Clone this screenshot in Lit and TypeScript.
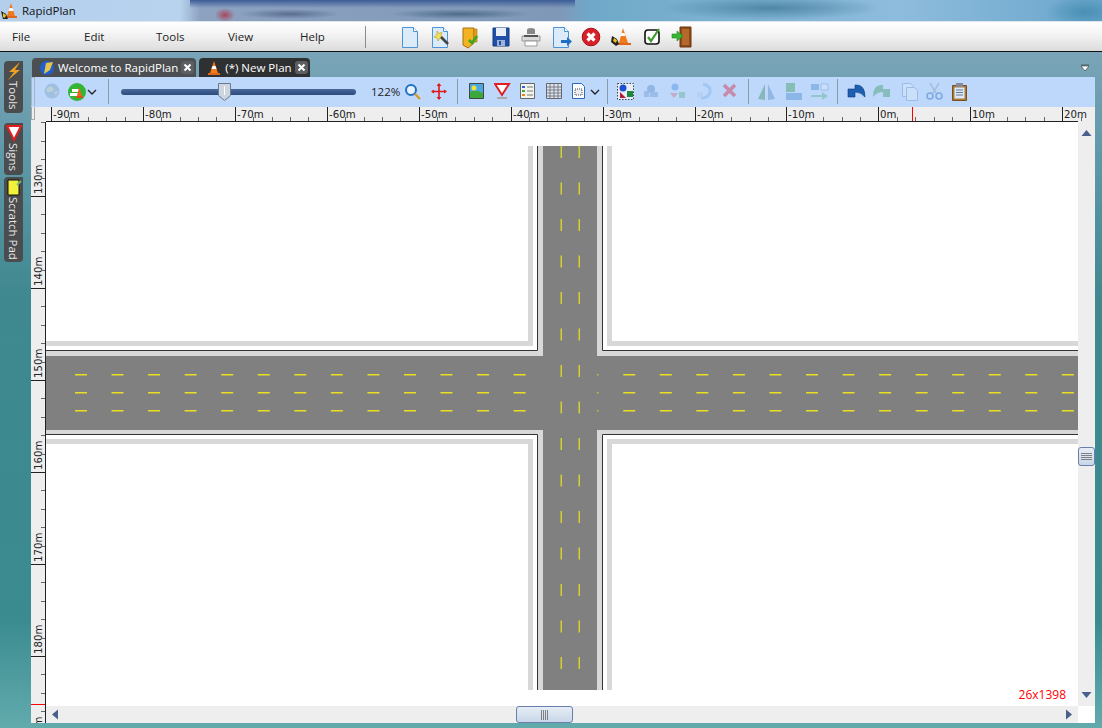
import { LitElement, html, svg, css } from 'lit';
import { customElement } from 'lit/decorators.js';

const range = (n: number) => Array.from({ length: n }, (_, i) => i);

// menu bar icons, 24x24 viewbox
const page = svg`<path d="M4.500 2.500h11l4 4v16h-15z" fill="#dcebfa" stroke="#4d94d6"/><path d="M15.500 2.500v4h4" fill="#fff" stroke="#4d94d6"/>`;
const mainIcons = [
    page,
    svg`${page}<path d="M9 6l2 2.500 3-1-1 3 2 2-3 .5-2 3-1-3-3-1 3-2.500z" fill="#f2e05a" stroke="#b59a22" stroke-width=".6"/><path d="M13 12l7 7" stroke="#444" stroke-width="2.600"/>`,
    svg`<path d="M5 3h11v15l-6 5-5-3z" fill="#f2b221" stroke="#a8700f"/><path d="M16 4h3v13h-3z" fill="#e8a21a" stroke="#a8700f" stroke-width=".6"/><path d="M19 11l-5 7-3-3" fill="none" stroke="#3aa822" stroke-width="2.600"/>`,
    svg`<path d="M4 3h16v18H4z" fill="#1f4fa8" stroke="#123a80"/><path d="M7 3h10v8H7z" fill="#e8eef6"/><path d="M8 15h8v6H8z" fill="#9db4d8"/><path d="M10 16h2v4h-2z" fill="#1f4fa8"/>`,
    svg`<path d="M8 9V5q0-2 4-2t4 2v4z" fill="#888"/><path d="M3 11h18v5H3z" fill="#d9d9d9" stroke="#9a9a9a"/><path d="M6 16h12v5H6z" fill="#fff" stroke="#999"/><path d="M5 10h14v2H5z" fill="#555"/>`,
    svg`${page}<path d="M12 15h6v-3l5 4.500-5 4.500v-3h-6z" fill="#1f6fc4"/>`,
    svg`<circle cx="12" cy="12" r="8.800" fill="#d8202a" stroke="#a81018"/><path d="M8.500 8.500l7 7M15.500 8.500l-7 7" stroke="#fff" stroke-width="3.200"/>`,
    svg`<path d="M14 3l5 15h-9z" fill="#f07a1c"/><path d="M12.500 8h3l1 3h-5z" fill="#fff"/><path d="M8 18h14v2H8z" fill="#e0661a"/><path d="M3 11l5 3 2 5-3 2-5-4z" fill="#222"/><path d="M5 13l3 2-1 3-3-2z" fill="#e8c21e"/>`,
    svg`<rect x="5" y="5" width="14" height="14" rx="3" fill="#fff" stroke="#111" stroke-width="1.600"/><path d="M8 12l3 4 8-12" fill="none" stroke="#3f9a2e" stroke-width="2.200"/>`,
    svg`<path d="M10 2h11v20H10z" fill="#8f4a18" stroke="#6a3610"/><path d="M12 4h7v16h-7z" fill="#b4682a"/><path d="M2 9h5V6l6 5-6 5v-3H2z" fill="#35b534" stroke="#1f8a20" stroke-width=".6"/>`,
];

const chevron = svg`<path d="M1 1l4 4 4-4" fill="none" stroke="#222" stroke-width="1.300"/>`;
const closeX = html`<span class="tab-x"><svg width="9" height="9" viewBox="0 0 9 9"><path d="M1.500 1.500l6 6M7.500 1.500l-6 6" stroke="#fff" stroke-width="2" /></svg></span>`;

// second toolbar, left to right
type Tool = { x: number; dim?: boolean; g: unknown };
const tools: Tool[] = [
    { x: 44, dim: true, g: svg`<circle cx="8" cy="8" r="7.500" fill="#7aa0c4"/><path d="M3 5q4-3 6 0t-3 4-3-4zM10 9l4-1-2 5z" fill="#b8c8a8"/>` },
    { x: 68, g: svg`<circle cx="9" cy="9" r="9" fill="#35b534"/><path d="M2 10h8v3H2zM4 6h7v3H4z" fill="#fff"/><path d="M11 4l3 9H9z" fill="#e8661a"/><path d="M8 13h7v2H8z" fill="#d8541a"/>` },
    { x: 469, g: svg`<path d="M.5.500h14v15H.500z" fill="#4aa8e0" stroke="#444"/><circle cx="5" cy="5" r="2.500" fill="#f6e03a"/><path d="M1 9q6-3 13 1v5H1z" fill="#3aa83a"/>` },
    { x: 494, g: svg`<path d="M1 1h14L8 12z" fill="#fff" stroke="#e02020" stroke-width="2"/><path d="M3 14h10v2H3z" fill="#aaa"/>` },
    { x: 520, g: svg`<path d="M.5.500h14v15H.500z" fill="#f4f4ee" stroke="#666"/><path d="M2 3h3v2H2z" fill="#2a6ad0"/><path d="M2 7h3v2H2z" fill="#3aa83a"/><path d="M2 11h3v2H2z" fill="#e08a20"/><path d="M7 4h6M7 8h6M7 12h6" stroke="#777"/>` },
    { x: 546, g: svg`<path d="M.5.500h15v15H.500z" fill="#dde4ea" stroke="#667"/><path d="M1 4h14M1 7h14M1 10h14M1 13h14M4 1v14M8 1v14M12 1v14" stroke="#667" stroke-width=".8"/>` },
    { x: 571, g: svg`<path d="M1.500.500h9l3 3v12h-12z" fill="#fff" stroke="#2a6ac0"/><path d="M4 6h7v6H4z" fill="#eee" stroke="#444" stroke-dasharray="1 1"/>` },
    { x: 617, g: svg`<path d="M.5.500h16v16H.500z" fill="#e8eef8" stroke="#444" stroke-dasharray="1.500 1.500"/><circle cx="6" cy="5" r="3.500" fill="#1d4fd0"/><path d="M3 9l6 6H3z" fill="#b01c3c"/><path d="M10 8h6v6h-6z" fill="#1a8a3a"/>` },
    { x: 643, dim: true, g: svg`<circle cx="8" cy="6" r="4" fill="#5a88c8"/><path d="M1 8h5v6H1zM7 9h8v5H7z" fill="#6a98d0"/>` },
    { x: 669, dim: true, g: svg`<circle cx="6" cy="4" r="3.500" fill="#4a88e0"/><path d="M1 10h8l-4 5z" fill="#d06a8a"/><path d="M10 9h6v6h-6z" fill="#5ab08a"/>` },
    { x: 696, dim: true, g: svg`<path d="M7 1q8 2 7 8t-9 6" fill="none" stroke="#7fb0e8" stroke-width="3"/><path d="M1 9h6v5H1z" fill="#a8c8ee"/>` },
    { x: 722, dim: true, g: svg`<path d="M2 2l11 11M13 2L2 13" stroke="#d02040" stroke-width="3.600"/>` },
    { x: 758, dim: true, g: svg`<path d="M7 1v16L0 16z" fill="#3f8a5a"/><path d="M10 1v16l7-1z" fill="#5a88c8"/>` },
    { x: 785, dim: true, g: svg`<path d="M1 0h9v9H1z" fill="#3f9a5a"/><path d="M1 10h16v7H1z" fill="#4a88d0"/>` },
    { x: 810, dim: true, g: svg`<path d="M1 1h8v6H1z" fill="#4a88d0"/><path d="M11 1h7v6h-7z" fill="#dfeaf8" stroke="#6a98d0"/><path d="M1 12h11V9l6 4-6 4v-3H1z" fill="#5ab08a"/>` },
    { x: 847, g: svg`<path d="M1 6h7V2q10-1 10 12-4-5-10-5v5H1z" fill="#1f5fb0" stroke="#123a80" stroke-width=".6"/>` },
    { x: 873, dim: true, g: svg`<path d="M17 6h-7V2Q0 1 0 14q4-5 10-5v5h7z" fill="#3f9a6a"/>` },
    { x: 901, dim: true, g: svg`<path d="M1.500.500h8l3 3v10h-11z" fill="#dfeaf8" stroke="#6a98d0"/><path d="M5.500 4.500h8l3 3v10h-11z" fill="#dfeaf8" stroke="#6a98d0"/>` },
    { x: 926, dim: true, g: svg`<path d="M4 0l6 10M13 0L7 10" stroke="#8a9ab0" stroke-width="1.600"/><circle cx="4" cy="13" r="3" fill="none" stroke="#2a6ac0" stroke-width="1.600"/><circle cx="13" cy="13" r="3" fill="none" stroke="#2a6ac0" stroke-width="1.600"/>` },
    { x: 952, g: svg`<path d="M.5 2.500h14v15H.500z" fill="#a87a3a" stroke="#7a5020"/><path d="M2.500 4.500h10v11h-10z" fill="#dfeaf4"/><path d="M4 0h7v4H4z" fill="#889"/><path d="M4 7h7M4 9.500h7M4 12h7" stroke="#5a7a9a"/>` },
];
const separators = [108, 457, 607, 748, 837];

@customElement('app-root')
export class AppRoot extends LitElement {
    static styles = css`
        :host {
            display: block;
            width: 1102px;
            height: 728px;
            overflow: hidden;
            font-family: "Open Sans", "Noto Sans", sans-serif;
            background: linear-gradient(#7aa4b8 52px, #5d98a6 160px, #3f8890 300px, #3a8b90 620px, #62abad 728px);
        }
        .title {
            height: 21px;
            display: flex;
            align-items: center;
            gap: 3px;
            padding-left: 1px;
            font-size: 11.5px;
            color: #111;
            background:
                linear-gradient(#3c5c96, transparent) 190px 0 / 385px 8px no-repeat,
                radial-gradient(ellipse 10px 7px at 225px 15px, #a8485c, transparent),
                radial-gradient(ellipse 50px 5px at 290px 14px, #5a6e90, transparent),
                radial-gradient(ellipse 70px 5px at 460px 14px, #4c6c8a, transparent),
                radial-gradient(ellipse 110px 12px at 770px 8px, #4f86a6, transparent),
                radial-gradient(ellipse 40px 16px at 1085px 12px, #4a8fb4, transparent),
                linear-gradient(90deg, #b4cfec, #b8d3ee 180px, #8ca2c0 200px, #8098b8 560px, #6fa8c8 590px, #7ab0d0 700px, #8ebcdc 900px, #6aa6cc);
        }
        .menubar {
            height: 29px;
            border-top: 1px solid #dfe5ea;
            border-bottom: 1px solid #111;
            display: flex;
            align-items: center;
            background: linear-gradient(#fff, #f6f6f6 35%, #dcdcdc);
            font-size: 11.5px;
            color: #222;
        }
        .menu {
            width: 72px;
            flex: none;
            padding-left: 12px;
            box-sizing: border-box;
        }
        .menu:last-of-type {
            width: 77px;
        }
        .divider {
            width: 1px;
            height: 22px;
            background: #8c8c8c;
            flex: none;
        }
        .main-icons {
            display: flex;
            gap: 6.2px;
            margin-left: 32px;
        }
        .main-icons svg {
            width: 24px;
            height: 24px;
        }
        .workspace {
            display: flex;
            height: 676px;
        }
        .side {
            width: 31px;
            flex: none;
            display: flex;
            flex-direction: column;
            align-items: flex-end;
            padding: 9px 8px 0 0;
            box-sizing: border-box;
        }
        .side-tab {
            width: 19px;
            box-sizing: border-box;
            background: #4a4c4e;
            border-radius: 4px 0 4px 4px;
            display: flex;
            flex-direction: column;
            align-items: center;
            padding-top: 1px;
            gap: 1px;
            color: #e8e8e8;
            font-size: 11.5px;
        }
        .side-tab span {
            writing-mode: vertical-rl;
            line-height: 17px;
        }
        .side-tab.tools {
            height: 52px;
            margin-bottom: 10px;
        }
        .side-tab.signs {
            height: 52px;
            margin-bottom: 2px;
        }
        .side-tab.pad {
            height: 85px;
        }
        .main {
            flex: 1;
            min-width: 0;
        }
        .tabs {
            height: 25px;
            position: relative;
            display: flex;
            align-items: flex-end;
            gap: 3px;
            padding-left: 1px;
        }
        .tab {
            height: 19px;
            box-sizing: border-box;
            display: flex;
            align-items: center;
            gap: 3px;
            padding: 0 2px 0 7px;
            background: #4c4f52;
            border-radius: 4px 4px 0 0;
            color: #fff;
            font-size: 11.5px;
        }
        .tab.active {
            background: #2f3032;
        }
        .tab-x {
            width: 13px;
            height: 13px;
            background: #5c5f62;
            border-radius: 3px;
            display: flex;
            align-items: center;
            justify-content: center;
        }
        .tab svg {
            flex: none;
        }
        .tab-menu {
            position: absolute;
            right: 12px;
            top: 12px;
        }
        .panel {
            width: 1064px;
            height: 646px;
            display: grid;
            grid-template-columns: 15px 1032px 17px;
            grid-template-rows: 30px 15px 584px 17px;
        }
        .toolbar {
            grid-column: 1 / 4;
            position: relative;
            background: #bdd8fb;
        }
        .tool {
            position: absolute;
            top: 6px;
        }
        .tool.dim {
            opacity: .42;
        }
        .sep {
            position: absolute;
            top: 2px;
            width: 1px;
            height: 25px;
            background: #8a9aac;
        }
        .grip {
            position: absolute;
            left: 0;
            top: 0;
            width: 4px;
            height: 29px;
            border: 1px solid #a8b4c4;
            border-width: 1px 1px 0 1px;
            box-sizing: border-box;
        }
        .chevron {
            position: absolute;
            top: 12px;
        }
        .chevron.first {
            left: 56px;
        }
        .chevron.second {
            left: 559px;
        }
        .slider {
            position: absolute;
            left: 90px;
            top: 12px;
            width: 235px;
            height: 6px;
            border-radius: 3px;
            background: linear-gradient(#4a6a9a, #2c4a7c);
        }
        .thumb {
            position: absolute;
            left: 187px;
            top: 6px;
        }
        .zoom-text {
            position: absolute;
            left: 340px;
            top: 7px;
            font-size: 11.5px;
            color: #222;
        }
        .tool.magnifier {
            left: 373px;
        }
        .tool.move {
            left: 400px;
        }
        .ruler-corner {
            background: #eee;
            position: relative;
        }
        .grip2 {
            position: absolute;
            left: 0;
            top: 0;
            width: 4px;
            height: 13px;
            border: 1px solid #a8a8a8;
            border-top: 0;
            box-sizing: border-box;
        }
        .ruler-h {
            grid-column: 2 / 4;
            height: 15px;
            background: #eee;
        }
        .ruler-v {
            background: #eee;
            grid-row: 3 / 5;
            width: 15px;
            height: 601px;
        }
        svg.rule {
            display: block;
        }
        svg.rule text {
            font-family: "DejaVu Sans", Verdana, sans-serif;
            font-size: 10.2px;
            fill: #222;
        }
        .canvas {
            position: relative;
            background: #fff;
        }
        .canvas svg {
            display: block;
        }
        .dimensions {
            position: absolute;
            right: 12px;
            bottom: 3px;
            color: #f00;
            font-size: 12px;
        }
        .scroll-v {
            background: #eee;
            position: relative;
        }
        .scroll-h {
            grid-column: 2;
            background: #eee;
            position: relative;
        }
        .corner {
            background: #fff;
        }
        .arrow {
            position: absolute;
        }
        .arrow.up {
            left: 3px;
            top: 8px;
        }
        .arrow.down {
            left: 3px;
            bottom: 8px;
        }
        .arrow.left {
            left: 6px;
            top: 3px;
        }
        .arrow.right {
            right: 6px;
            top: 3px;
        }
        .thumb-v, .thumb-h {
            position: absolute;
            box-sizing: border-box;
            background: linear-gradient(#e6edf6, #c8d6e8);
            border: 1px solid #6a7fae;
            border-radius: 3px;
            display: flex;
            align-items: center;
            justify-content: center;
        }
        .thumb-v {
            left: 0;
            top: 325px;
            width: 17px;
            height: 19px;
            flex-direction: column;
            gap: 1px;
        }
        .thumb-v i {
            width: 11px;
            height: 1px;
            background: #808080;
        }
        .thumb-h {
            left: 470px;
            top: 0;
            width: 57px;
            height: 17px;
            gap: 1px;
        }
        .thumb-h i {
            width: 1px;
            height: 10px;
            background: #808080;
        }
    `;

    renderRoad() {
        const grey = '#d8d8d8';
        const road = '#808080';
        // positions here are canvas relative: canvas starts at 46,122
        const vDash = range(15).map(i => 24 + i * 36.5);
        const hDash = range(28).map(i => 29 + i * 36.55);
        const edges = (x: number, y: number, w: number, h: number) => svg`<rect x=${x} y=${y} width=${w} height=${h} fill=${grey} />`;
        return html`<svg width="1032" height="584" viewBox="0 0 1032 584">
            ${edges(482, 24, 5, 544)} ${edges(561, 24, 5, 544)}
            ${edges(0, 219, 1032, 5)} ${edges(0, 317, 1032, 5)}
            <rect x="487" y="24" width="74" height="544" fill="#fff" />
            <rect x="0" y="224" width="1032" height="93" fill="#fff" />
            ${edges(492, 24, 64, 544)}
            ${edges(0, 229, 1032, 83)}
            <path d="M491.5 24V228.5H0M556.5 24V228.5H1032M491.5 568V312.5H0M556.5 568V312.5H1032" fill="none" stroke="#333" />
            <rect x="497" y="24" width="54" height="544" fill=${road} />
            <rect x="0" y="234" width="1032" height="74" fill=${road} />
            ${[252, 270, 288].map(y => hDash.map(x => x > 485 && x < 565
                ? null
                : svg`<rect x=${x} y=${y} width="12" height="1.5" fill="#e8e020" />`))}
            ${[252, 270, 288].map(y => svg`<rect x="551" y=${y} width="1.5" height="1.5" fill="#c8c040" />`)}
            ${[514.5, 532.5].map(x => vDash.map(y => svg`<rect x=${x} y=${y} width="1.5" height="12" fill="#d4d030" />`))}
        </svg>`;
    }

    renderRulerH() {
        // starts at x=46; -90m tick at x=51
        const start = 5;
        const step = 91.93;
        return html`<svg class="rule" width="1049" height="15" viewBox="0 0 1049 15">
            ${range(12).map(i => {
                const x = Math.round(start + i * step);
                return svg`<path d="M${x + .5} 0V15" stroke="#222" />
                    <text x=${x + 2} y="11">${(i - 9) * 10}m</text>
                    ${[1, 2, 3, 4].map(k => {
                        const m = Math.round(start + (i + k / 5) * step);
                        return svg`<path d="M${m + .5} 10V14" stroke="#666" />`;
                    })}`;
            })}
            <path d="M866.5 0V14" stroke="#f00" />
            <path d="M0 14.5H1032" stroke="#222" />
        </svg>`;
    }

    renderRulerV() {
        // starts at y=122; 130m tick at y=196
        const start = 74;
        const step = 92;
        return html`<svg class="rule" width="15" height="601" viewBox="0 0 15 601">
            ${range(7).map(i => {
                const y = start + i * step;
                return svg`<path d="M0 ${y + .5}H15" stroke="#222" />
                    <text transform="translate(11 ${y - 2}) rotate(-90)">${130 + i * 10}m</text>`;
            })}
            ${range(33).map(i => {
                const y = Math.round(start - 73.6 + i * 18.4);
                return i % 5 === 4 ? null : svg`<path d="M10 ${y + .5}H14" stroke="#666" />`;
            })}
            <path d="M0 582.5H15" stroke="#f00" />
            <path d="M14.5 0V601" stroke="#222" />
        </svg>`;
    }

    render() {
        return html`
            <div class="title">
                <svg width="18" height="18" viewBox="0 0 18 18">
                    <path d="M10 1l4 13H6z" fill="#f07a1c" /><path d="M8.5 6h3l1 3h-5z" fill="#fff" />
                    <path d="M5 14h11v2H5z" fill="#e0661a" /><path d="M0 9l5 3 2 5H2z" fill="#222" /><path d="M2 11l3 2-1 3-2-1z" fill="#e8c21e" />
                </svg>
                RapidPlan
            </div>
            <div class="menubar">
                <span class="menu">File</span><span class="menu">Edit</span><span class="menu">Tools</span><span class="menu">View</span><span class="menu">Help</span>
                <div class="divider"></div>
                <div class="main-icons">
                    ${mainIcons.map(g => html`<svg viewBox="0 0 24 24">${g}</svg>`)}
                </div>
            </div>
            <div class="workspace">
                <div class="side">
                    <div class="side-tab tools">
                        <svg width="16" height="18" viewBox="0 0 16 18"><path d="M14 0L3 10h5l-6 8 12-10H9z" fill="#f0a020" /></svg>
                        <span>Tools</span>
                    </div>
                    <div class="side-tab signs">
                        <svg width="16" height="18" viewBox="0 0 16 18"><path d="M1 2h14L8 16z" fill="#fff" stroke="#e02020" stroke-width="2" /></svg>
                        <span>Signs</span>
                    </div>
                    <div class="side-tab pad">
                        <svg width="16" height="18" viewBox="0 0 16 18"><path d="M2 2h11v15H2z" fill="#f2f23a" stroke="#111" /><path d="M11 7l4-4" stroke="#7ab87a" stroke-width="2" /></svg>
                        <span>Scratch Pad</span>
                    </div>
                </div>
                <div class="main">
                    <div class="tabs">
                        <div class="tab">
                            <svg width="16" height="16" viewBox="0 0 16 16"><circle cx="8" cy="8" r="7" fill="#1f5fd0" /><path d="M7 3l7-1-3 8-6 4z" fill="#e8c24a" /></svg>
                            Welcome to RapidPlan
                            ${closeX}
                        </div>
                        <div class="tab active">
                            <svg width="16" height="16" viewBox="0 0 16 16"><path d="M8 1l4 12H4z" fill="#f07a1c" /><path d="M6.5 6h3l1 3h-5z" fill="#fff" /><path d="M2 13h12v2H2z" fill="#e0661a" /></svg>
                            (*) New Plan
                            ${closeX}
                        </div>
                        <svg class="tab-menu" width="10" height="8" viewBox="0 0 10 8"><path d="M1 1h8M1 2h8L5 7z" fill="#fff" stroke="#333" stroke-width=".6" /></svg>
                    </div>
                    <div class="panel">
                        <div class="toolbar">
                            <div class="grip"></div>
                            ${tools.map(t => html`<svg class="tool ${t.dim ? 'dim' : ''}" style="left:${t.x - 31}px" width="20" height="20" viewBox="0 0 20 20">${t.g}</svg>`)}
                            ${separators.map(x => html`<div class="sep" style="left:${x - 31}px"></div>`)}
                            <svg class="chevron first" width="10" height="7" viewBox="0 0 10 7">${chevron}</svg>
                            <svg class="chevron second" width="10" height="7" viewBox="0 0 10 7">${chevron}</svg>
                            <div class="slider"></div>
                            <svg class="thumb" width="13" height="19" viewBox="0 0 13 19"><path d="M.5.5h12v12l-6 5-6-5z" fill="#cdd6e0" stroke="#6a7a8c" /><path d="M6.5 3v9" stroke="#fff" /></svg>
                            <span class="zoom-text">122%</span>
                            <svg class="tool magnifier" width="18" height="18" viewBox="0 0 18 18"><circle cx="7" cy="7" r="5" fill="#e8f2fc" stroke="#1f6fc4" stroke-width="2" /><path d="M11 11l5 5" stroke="#d89a20" stroke-width="2.4" /></svg>
                            <svg class="tool move" width="16" height="18" viewBox="0 0 16 18"><path d="M8 1v15M1 8.500h14" stroke="#e01818" stroke-width="1.600" /><path d="M8 0l-2.500 3h5zM8 17l-2.500-3h5zM0 8.500l3-2v4zM16 8.500l-3-2v4z" fill="#e01818" /></svg>
                        </div>
                        <div class="ruler-corner"><div class="grip2"></div></div>
                        <div class="ruler-h">${this.renderRulerH()}</div>
                        <div class="ruler-v">${this.renderRulerV()}</div>
                        <div class="canvas">
                            ${this.renderRoad()}
                            <span class="dimensions">26x1398</span>
                        </div>
                        <div class="scroll-v">
                            <svg class="arrow up" width="11" height="6" viewBox="0 0 11 6"><path d="M5.5 0l5 6H.5z" fill="#4a5f8c" /></svg>
                            <div class="thumb-v"><i></i><i></i><i></i><i></i></div>
                            <svg class="arrow down" width="11" height="6" viewBox="0 0 11 6"><path d="M5.5 6l5-6H.5z" fill="#4a5f8c" /></svg>
                        </div>
                        <div class="scroll-h">
                            <svg class="arrow left" width="6" height="11" viewBox="0 0 6 11"><path d="M0 5.5l6-5v10z" fill="#4a5f8c" /></svg>
                            <div class="thumb-h"><i></i><i></i><i></i><i></i></div>
                            <svg class="arrow right" width="6" height="11" viewBox="0 0 6 11"><path d="M6 5.5l-6-5v10z" fill="#4a5f8c" /></svg>
                        </div>
                        <div class="corner"></div>
                    </div>
                </div>
            </div>
        `;
    }
}
